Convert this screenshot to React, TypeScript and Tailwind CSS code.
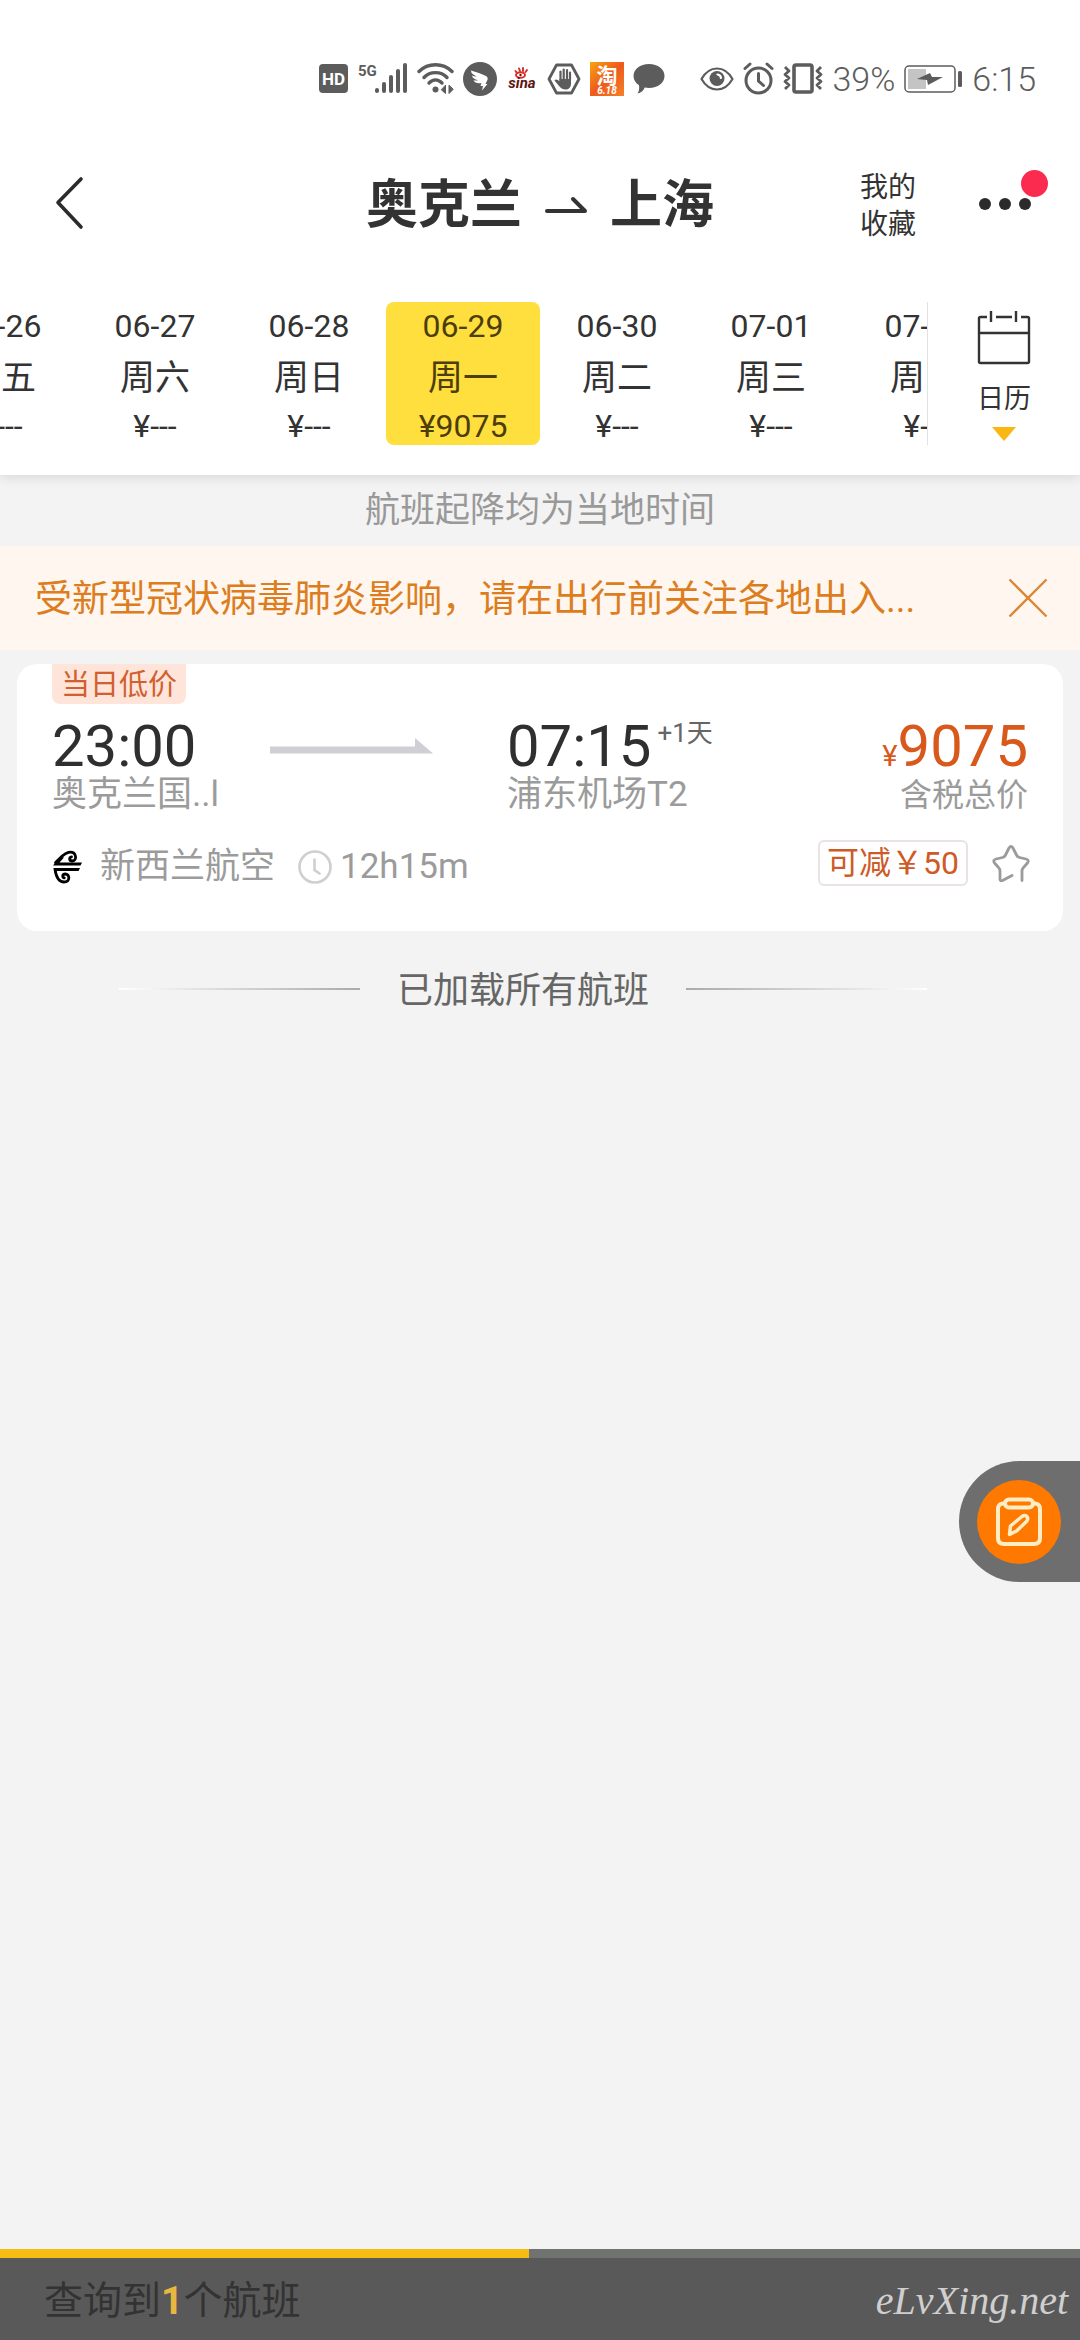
import { useState } from "react";

const days = [
  { date: "06-26", week: "周五", price: "¥---" },
  { date: "06-27", week: "周六", price: "¥---" },
  { date: "06-28", week: "周日", price: "¥---" },
  { date: "06-29", week: "周一", price: "¥9075" },
  { date: "06-30", week: "周二", price: "¥---" },
  { date: "07-01", week: "周三", price: "¥---" },
  { date: "07-02", week: "周四", price: "¥---" },
];

function StatusBar() {
  return (
    <div className="flex items-center justify-end gap-[35px] pt-[54px] pr-11 text-[#5c5c5c]">
      <div className="flex h-[50px] items-center gap-[9px]">
        <svg width="30" height="34" viewBox="0 0 30 34">
          <rect y="2" width="29" height="29" rx="4" fill="currentColor" />
          <text x="14.5" y="22.5" textAnchor="middle" fontSize="17" fontWeight="700" fill="#fff">
            HD
          </text>
        </svg>
        <svg width="50" height="34" viewBox="0 0 50 34" fill="currentColor">
          <text x="0" y="14" fontSize="15" fontWeight="700">
            5G
          </text>
          <rect x="17" y="26" width="4" height="5" rx="2" />
          <rect x="24" y="20" width="4" height="11" rx="2" />
          <rect x="31" y="13" width="4" height="18" rx="2" />
          <rect x="38" y="7" width="4" height="24" rx="2" />
          <rect x="45" y="1" width="4" height="30" rx="2" />
        </svg>
        <svg width="37" height="34" viewBox="0 0 37 34" fill="none" stroke="currentColor" strokeWidth="3.4" strokeLinecap="round">
          <path d="M2 9.500C11 .5 26 .5 35 9.500" />
          <path d="M7 15.500C13 9 24 9 30 15.500" />
          <path d="M12 21C16 17 21 17 25 21" />
          <circle cx="18.500" cy="27.500" r="3" fill="currentColor" stroke="none" />
          <path d="M28.500 23.500v8l-4-3.500zM32 23.500v8l4-4z" fill="currentColor" strokeWidth="1" />
        </svg>
        <svg width="34" height="34" viewBox="0 0 34 34">
          <circle cx="17" cy="17" r="17" fill="currentColor" />
          <path
            d="M8 8.500c5 1.500 11 3.500 15 5.500 2 1 2 3 1.200 4.500L22.500 22h2L19 28.500l1-4.500h-2.500l1-3c-4 .6-7-.2-8-3 1.500.6 3 .6 4.500.3-3.500-.9-5.500-2.300-6-4.800 1.500.8 3 1 4.500.9C10 12.500 8 11.500 8 8.500z"
            fill="#fff"
          />
        </svg>
        <svg width="32" height="34" viewBox="0 0 32 34">
          <path d="M9.500 9l1.500 2M13 6.500l1 2.500M17 6v3M21 8l-1.500 2" stroke="#d8332a" strokeWidth="2" strokeLinecap="round" />
          <ellipse cx="14.500" cy="13" rx="4.500" ry="2.800" fill="none" stroke="#d8332a" strokeWidth="2" />
          <circle cx="14.500" cy="13" r="1.200" fill="#5d1712" />
          <text x="16" y="26" textAnchor="middle" fontSize="15" fontWeight="700" fontStyle="italic" fill="#5d1712">
            sina
          </text>
        </svg>
        <svg width="34" height="34" viewBox="0 0 34 34">
          <path d="M9.500 3h15l7.500 14-7.500 14h-15L2 17z" fill="none" stroke="currentColor" strokeWidth="2.800" strokeLinejoin="round" />
          <path
            d="M13.500 18V9.500M16.700 17V7.500M20 17V8M23 18v-7.500"
            stroke="currentColor"
            strokeWidth="2.200"
            strokeLinecap="round"
          />
          <path d="M12.400 17H24v4.500c0 4-2.500 6-5.500 6-2.500 0-4.500-1-6-3l-5-6c1-1.800 3-1 4.900.8z" fill="currentColor" />
        </svg>
        <svg width="34" height="34" viewBox="0 0 34 34">
          <defs>
            <linearGradient id="tao" x1="0" y1="0" x2="1" y2="1">
              <stop offset="0" stopColor="#f8a313" />
              <stop offset=".5" stopColor="#ee5a1c" />
              <stop offset="1" stopColor="#f5812a" />
            </linearGradient>
          </defs>
          <rect width="34" height="34" fill="url(#tao)" />
          <text x="17" y="21" textAnchor="middle" fontSize="21" fontWeight="700" fill="#fff">
            淘
          </text>
          <text x="17" y="32" textAnchor="middle" fontSize="10" fontWeight="700" fontStyle="italic" fill="#fff">
            6.18
          </text>
        </svg>
        <svg width="32" height="34" viewBox="0 0 32 34">
          <path
            d="M16 2c9 0 15.500 5.200 15.500 12S25 26 16 26c-1.500 0-3-.1-4.300-.4C10.500 29 8 31 4.500 31.500c1.500-2 2-4.500 1.500-8.200C2.700 21 .5 17.800.5 14 .5 7.200 7 2 16 2z"
            fill="currentColor"
          />
        </svg>
      </div>
      <div className="flex h-[50px] items-center gap-[9px] text-[34px] leading-[50px] font-light">
        <svg width="34" height="34" viewBox="0 0 34 34" fill="none" stroke="currentColor" strokeWidth="2.200">
          <path d="M1.500 17C9.500 3 24.500 3 32.500 17 24.500 31 9.500 31 1.500 17z" strokeLinejoin="round" />
          <circle cx="17" cy="16.500" r="7.500" fill="currentColor" stroke="none" />
          <path d="M17.500 12.500a4 4 0 0 1 3.500 3.500" stroke="#fff" strokeLinecap="round" />
        </svg>
        <svg width="31" height="34" viewBox="0 0 31 34" fill="none" stroke="currentColor" strokeWidth="3" strokeLinecap="round">
          <circle cx="15.500" cy="18.500" r="12.500" />
          <path d="M15.500 11.500v7.500l5 4.500M2 6.500l5-4.500M29 6.500L24 2" />
        </svg>
        <svg width="40" height="34" viewBox="0 0 40 34" fill="none" stroke="currentColor" strokeLinejoin="round">
          <rect x="11" y="3" width="18" height="27" rx="2" strokeWidth="3.600" />
          <path d="M2 5l4 4-4 3.500 4 3.500-4 3.500L6 23l-4 4M38 5l-4 4 4 3.500-4 3.500 4 3.500-4 3.500 4 4" strokeWidth="2.800" />
        </svg>
        <span>39%</span>
        <svg width="59" height="34" viewBox="0 0 59 34">
          <rect x="1" y="4" width="50" height="26" rx="4" fill="none" stroke="currentColor" strokeWidth="1.500" />
          <rect x="4" y="7" width="18" height="20" fill="#c4c4c4" />
          <path d="M13 17l13-6 2 4h11l-15 8-1-5z" fill="currentColor" />
          <rect x="54" y="9" width="4" height="16" rx="1.500" fill="currentColor" />
        </svg>
        <span>6:15</span>
      </div>
    </div>
  );
}

function TitleBar() {
  return (
    <header className="mt-[50px] flex h-[100px] items-center px-10">
      <button aria-label="返回" className="flex-1">
        <svg width="56" height="56" viewBox="0 0 56 56" fill="none" stroke="#2b2b2b" strokeWidth="3.600" strokeLinecap="round" strokeLinejoin="round">
          <path d="M41 3L18 26.500 41 51" />
        </svg>
      </button>
      <h1 className="flex items-center gap-[23px] pt-1 text-[52px] leading-[96px] font-bold text-[#333]">
        <span>奥克兰</span>
        <svg width="42" height="20" viewBox="0 0 42 20" fill="none" stroke="#333" strokeWidth="4" strokeLinecap="round" strokeLinejoin="round">
          <path d="M2 15h38L28 3" />
        </svg>
        <span>上海</span>
      </h1>
      <div className="flex flex-1 items-center justify-end gap-[63px]">
        <a href="#favorites" className="w-14 pt-1 text-[28px] leading-[37px] text-[#333]">
          我的收藏
        </a>
        <button aria-label="更多" className="relative flex h-14 w-[61px] items-center gap-[8px]">
          <span className="size-3 rounded-full bg-[#2b2b2b]" />
          <span className="size-3 rounded-full bg-[#2b2b2b]" />
          <span className="size-3 rounded-full bg-[#2b2b2b]" />
          <span className="absolute -top-[6px] -right-2 size-[27px] rounded-full bg-[#fb2b50]" />
        </button>
      </div>
    </header>
  );
}

function DateStrip() {
  const [selected, setSelected] = useState("06-29");

  return (
    <nav className="flex items-start pt-12 pb-[30px] text-[#333]">
      <div className="flex flex-1 overflow-hidden border-r border-[#e2e2e2]">
        <div className="-ml-[76px] flex">
          {days.map((day) => (
            <button
              key={day.date}
              onClick={() => setSelected(day.date)}
              className={`flex h-[143px] w-[154px] shrink-0 flex-col items-center rounded-lg text-[32px] ${
                day.date === selected ? "bg-[#ffdf3e] text-[#4d3d0a]" : ""
              }`}
            >
              <span className="leading-[48px]">{day.date}</span>
              <span className="text-[35px] leading-[58px]">{day.week}</span>
              <span className="leading-[36px]">{day.price}</span>
            </button>
          ))}
        </div>
      </div>
      <button className="flex w-[152px] flex-col items-center pt-[9px]">
        <svg width="54" height="54" viewBox="0 0 54 54" fill="none" stroke="#333" strokeWidth="2.400">
          <path d="M10 6H3.500Q2 6 2 7.500v43Q2 52 3.500 52h47q1.500 0 1.500-1.500v-43Q52 6 50.500 6H44M19 6h16M2 22h50M14 0v11M39 0v11" />
        </svg>
        <span className="mt-3 text-[27px] leading-[44px]">日历</span>
        <svg width="24" height="14" viewBox="0 0 24 14" className="mt-[6px]">
          <path d="M0 0h24L12 14z" fill="#f9b70f" />
        </svg>
      </button>
    </nav>
  );
}

function FlightCard() {
  return (
    <article className="mx-[17px] mt-[14px] rounded-[20px] bg-white px-[35px] pb-[38px]">
      <span className="inline-block h-10 rounded-b-lg bg-[#ffe4d9] px-[9px] align-top text-[29px] leading-[42px] text-[#d0602f]">
        当日低价
      </span>
      <div className="flex pt-[14px] text-[35px] text-[#9b9b9b]">
        <div className="w-[217px]">
          <p className="text-[58px] leading-[56px] text-[#2f2f2f]">23:00</p>
          <p className="leading-[42px]">奥克兰国..l</p>
        </div>
        <svg width="165" height="18" viewBox="0 0 165 18" className="mt-[20px] shrink-0">
          <path d="M1 8.500h145V0l18 15.500H1z" fill="#cfcfd6" />
        </svg>
        <div className="ml-[73px] flex-1">
          <p className="flex items-start gap-[6px] text-[58px] leading-[56px] text-[#2f2f2f]">
            07:15
            <span className="text-[26px] leading-[30px] text-[#666]">+1天</span>
          </p>
          <p className="leading-[42px]">浦东机场T2</p>
        </div>
        <div className="text-right">
          <p className="text-[58px] leading-[56px] text-[#d8591b]">
            <span className="text-[29px] leading-none">¥</span>9075
          </p>
          <p className="text-[32px] leading-[42px]">含税总价</p>
        </div>
      </div>
      <div className="mt-[25px] flex h-[52px] items-center text-[35px] leading-[52px] text-[#9b9b9b]">
        <svg width="32" height="34" viewBox="0 0 32 34" fill="none" stroke="#000" strokeLinecap="round">
          <path d="M3.500 12.500C9 8 12 2.500 18 2.200c6.500-.2 7.500 8.800 2.300 8.800-3.300 0-3.500-4-.8-4.200" strokeWidth="2.800" />
          <path d="M1 15.500L8 7l4 .5-4.500 5H30l-1.500 3z" fill="#000" stroke="none" />
          <path d="M1 18h27l-1.500 3H4.500z" fill="#000" stroke="none" />
          <path d="M3 19.500C4 26 6.500 32 12 32c6.500 0 6-8 1.200-8-3 0-3.200 3.500-.9 3.800" strokeWidth="2.800" />
        </svg>
        <span className="ml-[16px]">新西兰航空</span>
        <svg width="34" height="34" viewBox="0 0 34 34" className="mr-2 ml-[23px]" fill="none" stroke="#cfcfcf" strokeWidth="2.600" strokeLinecap="round">
          <circle cx="17" cy="17" r="15.500" />
          <path d="M16.500 9.500V20l5 3.500" />
        </svg>
        <span>12h15m</span>
        <div className="-mr-[2px] mb-2 ml-auto flex items-center gap-6">
          <span className="rounded-md border-2 border-[#eae3e3] px-[7px] text-[32px] leading-[42px] text-[#cf5a26]">
            可减￥50
          </span>
          <button aria-label="收藏航班">
            <svg width="38" height="38" viewBox="0 0 38 38" fill="none" stroke="#9b9b9b" strokeWidth="2.800" strokeLinecap="round" strokeLinejoin="round">
              <path d="M30 36.500V27q0-2 1.500-3.500l4-4.500q2-3-1.500-4l-6.500-1.500q-2-.5-3-2.500l-3.500-7q-2-3-4 0l-3.500 7q-1 2-3 2.500L4 15q-3.500 1-1.500 4l4 4.500Q8 25 8 27v8q0 2.500 2.500 1.500l9.500-5" />
            </svg>
          </button>
        </div>
      </div>
    </article>
  );
}

function FeedbackButton() {
  return (
    <button
      aria-label="意见反馈"
      className="fixed top-[1461px] right-0 flex h-[121px] w-[121px] items-center rounded-l-full bg-[#6e6e6e] pl-[18px]"
    >
      <span className="flex size-[84px] items-center justify-center rounded-full bg-[#ff7800]">
        <svg width="48" height="50" viewBox="0 0 48 50" fill="none" stroke="#ffedc4" strokeWidth="4" strokeLinejoin="round">
          <path d="M10 6.500H8Q3 7 3 12v29q0 6 6 6h30q6 0 6-6V12q0-5-5-5.500h-2" />
          <rect x="10" y="2.500" width="28" height="8" rx="4" />
          <path d="M14.500 37.500l1-8.500L27 19.500c4-2.500 7 1 5 4.500L21.500 34z" strokeWidth="3.500" />
        </svg>
      </span>
    </button>
  );
}

export default function App() {
  const [showNotice, setShowNotice] = useState(true);

  return (
    <div className="flex min-h-screen flex-col overflow-x-hidden bg-[#f3f3f3] font-['Roboto','Noto_Sans_CJK_SC',sans-serif]">
      <div className="bg-white shadow-[0_2px_12px_rgba(0,0,0,0.12)]">
        <StatusBar />
        <TitleBar />
        <DateStrip />
      </div>

      <main className="flex-1">
        <p className="h-[71px] text-center text-[35px] leading-[71px] text-[#999]">航班起降均为当地时间</p>
        {showNotice && (
          <div className="flex h-[104px] items-center justify-between bg-[#fff6ef] pr-8 pl-[35px]">
            <p className="pt-1 text-[37px] leading-[100px] text-[#dc7d20]">受新型冠状病毒肺炎影响，请在出行前关注各地出入...</p>
            <button aria-label="关闭" onClick={() => setShowNotice(false)}>
              <svg width="40" height="40" viewBox="0 0 40 40" stroke="#dc8638" strokeWidth="2.400">
                <path d="M1.500 1.500l37 37M38.500 1.500l-37 37" />
              </svg>
            </button>
          </div>
        )}
        <FlightCard />
        <div className="mt-[28px] mr-[34px] flex items-center justify-center gap-[37px]">
          <span className="h-[2px] w-[241px] bg-linear-to-l from-[#aaa] to-white" />
          <p className="pt-1 text-[36px] leading-[56px] text-[#666]">已加载所有航班</p>
          <span className="h-[2px] w-[241px] bg-linear-to-r from-[#aaa] to-white" />
        </div>
      </main>

      <FeedbackButton />

      <footer className="bg-[#595959]">
        <div className="h-[9px] bg-[#717371]">
          <div className="h-full w-[49%] bg-[#f5bd12]" />
        </div>
        <div className="flex h-[82px] items-center justify-between pt-1 pr-3 pl-11">
          <p className="text-[39px] leading-[78px] text-[#333]">
            查询到<span className="font-bold text-[#e9b640]">1</span>个航班
          </p>
          <a href="#home" className="font-['Liberation_Serif',cursive] text-[40px] leading-[78px] text-[#cfcfcf] italic">
            eLvXing.net
          </a>
        </div>
      </footer>
    </div>
  );
}
